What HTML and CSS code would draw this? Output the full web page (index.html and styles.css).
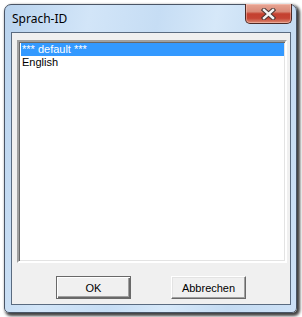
FILE: index.html
```html
<!DOCTYPE html>
<html>
<head>
<meta charset="utf-8">
<link rel="stylesheet" href="styles.css">
</head>
<body>
<div class="window">
  <div class="titlebar">
    <span class="title">Sprach-ID</span>
    <div class="close">
      <svg width="15" height="12" viewBox="0 0 15 12">
        <path d="M3 2 L12 10 M12 2 L3 10" stroke="#4a3633" stroke-width="4.4" stroke-linecap="square" fill="none"/>
        <path d="M3 2 L12 10 M12 2 L3 10" stroke="#f4f4f4" stroke-width="2.4" stroke-linecap="square" fill="none"/>
      </svg>
    </div>
  </div>
  <div class="client">
    <div class="listbox">
      <div class="item selected">*** default ***</div>
      <div class="item">English</div>
    </div>
    <div class="buttons">
      <button class="btn default">OK</button>
      <button class="btn">Abbrechen</button>
    </div>
  </div>
</div>
</body>
</html>
```
FILE: styles.css
```css
html, body {
  margin: 0;
  padding: 0;
}
body {
  width: 302px;
  height: 317px;
  background: #ffffff;
  overflow: hidden;
}
.window {
  box-sizing: border-box;
  margin: 4px 0 0 4px;
  width: 293px;
  height: 309px;
  border: 1px solid #4a5566;
  border-radius: 7px 7px 5px 5px;
  background: linear-gradient(100deg, #b9d3ee 0%, #d2e5f8 25%, #c6ddf4 45%, #d6e8f9 62%, #c4dbf2 80%, #cde1f6 100%);
  box-shadow: 2px 2px 3px 1px rgba(0,0,0,0.75);
  display: flex;
  flex-direction: column;
}
.titlebar {
  height: 27px;
  display: flex;
  justify-content: space-between;
  align-items: flex-start;
  padding: 0 4px 0 7px;
}
.title {
  font-family: "Noto Sans", "Open Sans", sans-serif;
  font-size: 12px;
  color: #000;
  padding-top: 6px;
  line-height: 16px;
}
.close {
  box-sizing: border-box;
  width: 47px;
  height: 20px;
  margin-top: -1px;
  border: 1px solid #4d2a26;
  border-top: none;
  border-radius: 0 0 5px 5px;
  background: linear-gradient(to bottom, #e8a594 0%, #d98a78 40%, #c4402f 52%, #c54434 75%, #dc8c74 100%);
  box-shadow: inset 0 0 0 1px rgba(255,210,200,0.45);
  display: flex;
  align-items: center;
  justify-content: center;
}
.close svg { display: block; }
.client {
  box-sizing: border-box;
  width: 280px;
  height: 273px;
  margin-left: 6px;
  border: 1px solid #5a6b80;
  background: #f0f0f0;
  padding: 7px 0 0 5px;
  display: flex;
  flex-direction: column;
}
.listbox {
  box-sizing: border-box;
  width: 270px;
  height: 223px;
  background: #fff;
  border-style: solid;
  border-width: 2px;
  border-color: #a0a0a0 #ffffff #ffffff #a0a0a0;
  box-shadow: inset 1px 1px 0 #696969, inset -1px -1px 0 #e3e3e3;
  padding: 1px 1px 0 2px;
  font-family: "Liberation Sans", Arial, sans-serif;
  font-size: 11px;
}
.item {
  height: 13px;
  line-height: 13px;
  padding-left: 1px;
  color: #000;
  white-space: nowrap;
}
.item.selected {
  background: #3399ff;
  color: #fff;
}
.buttons {
  display: flex;
  gap: 40px;
  margin-top: 13px;
  padding-left: 39px;
}
.btn {
  box-sizing: border-box;
  width: 75px;
  height: 23px;
  margin: 0;
  padding: 0;
  font-family: "Liberation Sans", Arial, sans-serif;
  font-size: 11px;
  color: #000;
  background: #f0f0f0;
  border-style: solid;
  border-width: 1px;
  border-color: #ffffff #696969 #696969 #ffffff;
  box-shadow: inset -1px -1px 0 #a0a0a0, inset 1px 1px 0 #e3e3e3;
}
.btn.default {
  border: 1px solid #696969;
  box-shadow: inset 1px 1px 0 #ffffff, inset -1px -1px 0 #696969, inset -2px -2px 0 #a0a0a0;
}
```
